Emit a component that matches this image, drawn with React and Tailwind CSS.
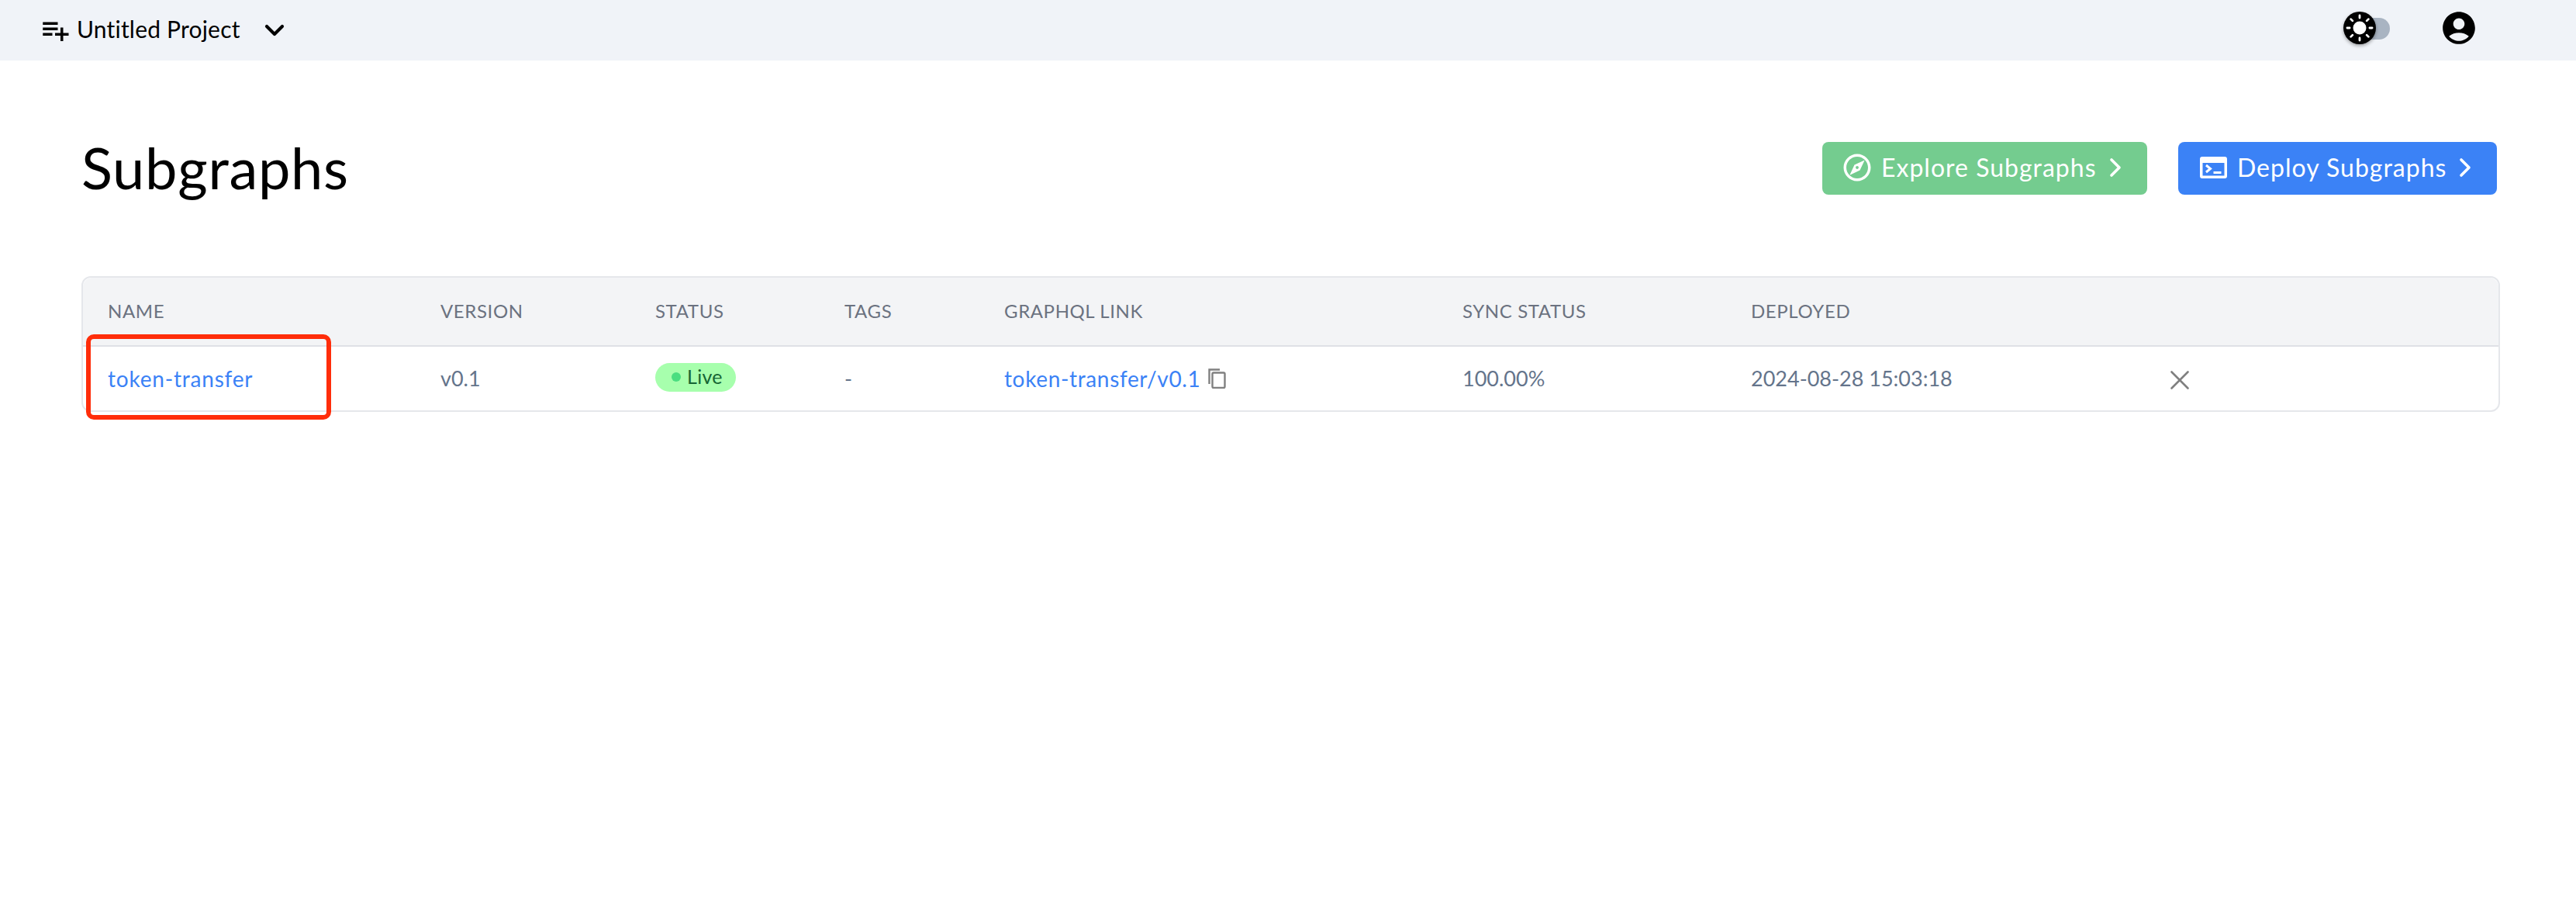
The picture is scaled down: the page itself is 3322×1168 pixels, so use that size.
import React from "react";
import { MdPlaylistAdd, MdAccountCircle, MdOutlineExplore } from "react-icons/md";
import { ChevronDown, ChevronRight, X } from "lucide-react";

const font = "font-['Lato','Open_Sans',sans-serif]";

function SunKnob() {
  const rays = [0, 45, 90, 135, 180, 225, 270, 315];
  return (
    <svg viewBox="0 0 42 42" className="absolute left-0 top-0 h-[42px] w-[42px] drop-shadow-[0_2px_2px_rgba(0,0,0,0.35)]">
      <circle cx="21" cy="21" r="21" fill="#000" />
      <circle cx="21" cy="21" r="8.5" fill="#fff" />
      {rays.map((r) => (
        <rect key={r} x="19.6" y="3.5" width="2.8" height="6" rx="1.4" fill="#fff" transform={`rotate(${r} 21 21)`} />
      ))}
    </svg>
  );
}

function TerminalIcon() {
  return (
    <svg viewBox="0 0 35 28" className="h-[28px] w-[35px] shrink-0">
      <path
        fillRule="evenodd"
        fill="#fff"
        d="M3 0h29a3 3 0 0 1 3 3v22a3 3 0 0 1-3 3H3a3 3 0 0 1-3-3V3a3 3 0 0 1 3-3zM3.5 8v16.5h28V8z"
      />
      <path d="M8 11l5.5 4.5L8 20" fill="none" stroke="#fff" strokeWidth="3" />
      <path d="M17.5 20.5h10" fill="none" stroke="#fff" strokeWidth="3" />
    </svg>
  );
}

function CopyIcon() {
  return (
    <svg viewBox="0 0 23 26" className="ml-[10px] h-[26px] w-[23px] shrink-0" fill="none" stroke="#808080" strokeWidth="2.4">
      <path d="M1.5 20V1.5H15" />
      <rect x="5.5" y="5.5" width="16" height="19.5" rx="1.5" />
    </svg>
  );
}

const headers = [
  ["NAME", "w-[429px]"],
  ["VERSION", "w-[277px]"],
  ["STATUS", "w-[244px]"],
  ["TAGS", "w-[206px]"],
  ["GRAPHQL LINK", "w-[591px]"],
  ["SYNC STATUS", "w-[372px]"],
  ["DEPLOYED", "w-[544px]"],
  ["", ""],
];

export default function App() {
  return (
    <div className={`${font} min-h-[1168px] bg-white text-black`}>
      <header className="flex h-[78px] items-center bg-[#f0f3f8] pl-[50px] pr-[126px]">
        <MdPlaylistAdd className="h-[42px] w-[42px] shrink-0" />
        <span className="ml-[7px] pb-[3px] text-[30px] tracking-[0.2px]">Untitled Project</span>
        <ChevronDown className="ml-[24px] h-[40px] w-[40px]" strokeWidth={2.5} />
        <div className="relative mb-[6px] ml-auto h-[42px] w-[60px]">
          <div className="absolute left-[18px] top-[8px] h-[28px] w-[42px] rounded-full bg-[#a9b4c2]" />
          <SunKnob />
        </div>
        <MdAccountCircle className="mb-[6px] ml-[64px] h-[50px] w-[50px] shrink-0" />
      </header>

      <main className="px-[105px]">
        <div className="flex w-[3115px] items-center justify-between pt-[105px]">
          <h1 className="pb-[3px] text-[74px] leading-[65px] font-normal tracking-[0.7px]">Subgraphs</h1>
          <div className="flex gap-[40px]">
            <button className="flex h-[68px] w-[419px] items-center rounded-[8px] bg-[#74cc8f] pb-[2px] pl-[24px] text-[32px] tracking-[1px] text-white">
              <MdOutlineExplore className="h-[42px] w-[42px] shrink-0" />
              <span className="ml-[10px]">Explore Subgraphs</span>
              <ChevronRight className="ml-[4px] h-[40px] w-[40px]" strokeWidth={2.2} />
            </button>
            <button className="flex h-[68px] w-[411px] items-center rounded-[8px] bg-[#3b82f6] pb-[2px] pl-[28px] text-[32px] tracking-[1px] text-white">
              <TerminalIcon />
              <span className="ml-[13px]">Deploy Subgraphs</span>
              <ChevronRight className="ml-[4px] h-[40px] w-[40px]" strokeWidth={2.2} />
            </button>
          </div>
        </div>

        <div className="relative mt-[105px] w-[3119px] overflow-visible rounded-[12px] border-2 border-[#e5e7eb]">
          <table className="w-full table-fixed border-collapse">
            <thead>
              <tr className="h-[88px] border-b-2 border-[#dfe1e6] bg-[#f3f4f6]">
                {headers.map(([h, w], i) => (
                  <th key={i} className={`${w} pb-[2px] pl-[32px] text-left text-[24px] font-normal tracking-[0.6px] text-[#6b7280] first:rounded-tl-[12px] last:rounded-tr-[12px]`}>
                    {h}
                  </th>
                ))}
              </tr>
            </thead>
            <tbody>
              <tr className="h-[83px] text-[27px] text-[#64748b]">
                <td className="pl-[32px] text-[28px] tracking-[0.8px] text-[#3b82f6]">token-transfer</td>
                <td className="pl-[32px]">v0.1</td>
                <td className="pl-[32px]">
                  <span className="mb-[3px] flex h-[37px] w-[104px] items-center rounded-full bg-[#a7ffad] pb-[2px] pl-[21px] text-[25px] tracking-[0.3px] text-[#166534]">
                    <span className="h-[12px] w-[12px] rounded-full bg-[#4ade80]" />
                    <span className="ml-[8px]">Live</span>
                  </span>
                </td>
                <td className="pl-[32px]">-</td>
                <td className="pl-[32px]">
                  <span className="flex items-center text-[28px] tracking-[0.65px] text-[#3b82f6]">
                    token-transfer/v0.1
                    <CopyIcon />
                  </span>
                </td>
                <td className="pl-[32px]">100.00%</td>
                <td className="pl-[32px]">2024-08-28 15:03:18</td>
                <td className="pl-[20px]">
                  <X className="mt-[3px] h-[42px] w-[42px] text-[#808080]" strokeWidth={1.5} />
                </td>
              </tr>
            </tbody>
          </table>
          <div className="absolute left-[4px] top-[73px] h-[110px] w-[316px] rounded-[10px] border-[6px] border-[#ff2d0a]" />
        </div>
      </main>
    </div>
  );
}
